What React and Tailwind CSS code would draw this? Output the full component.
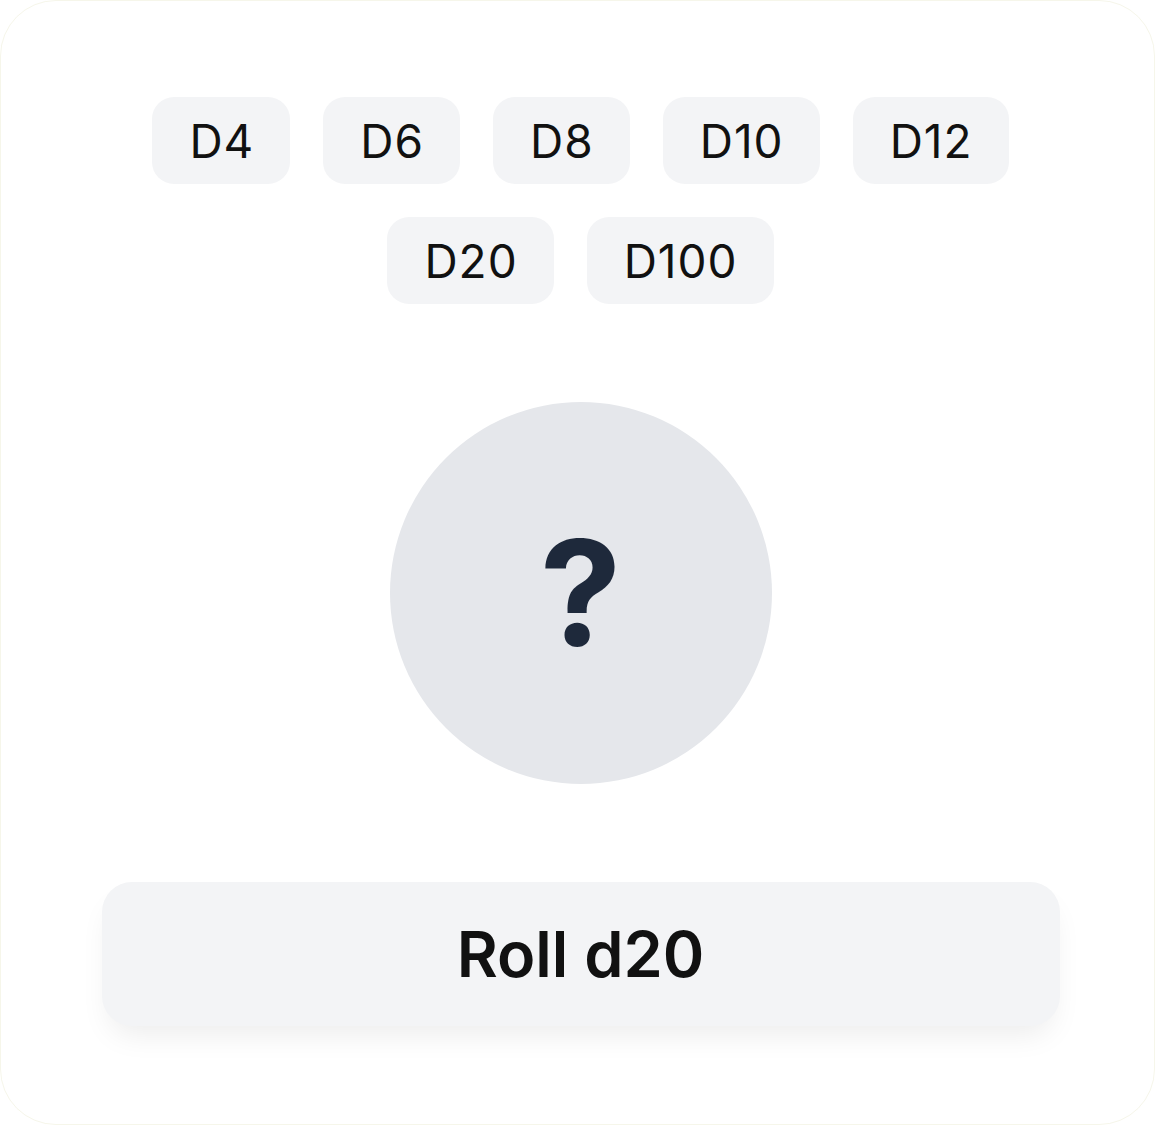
import React, { useState } from 'react';

const dice = ['D4', 'D6', 'D8', 'D10', 'D12', 'D20', 'D100'];

export default function App() {
  const [selected, setSelected] = useState('D20');
  const [result, setResult] = useState(null);

  const roll = () => {
    const sides = parseInt(selected.slice(1), 10);
    setResult(Math.floor(Math.random() * sides) + 1);
  };

  return (
    <div className="min-h-screen bg-white" style={{ fontFamily: 'Inter, "Noto Sans", sans-serif' }}>
      <div className="w-[1155px] h-[1125px] bg-white border border-[#f6f6ea] rounded-[56px] flex flex-col items-center pt-[96px] pl-[6px]">
        <div className="w-[958px] flex flex-wrap justify-center gap-[33px]">
          {dice.map(d => (
            <button
              key={d}
              onClick={() => setSelected(d)}
              className="h-[87px] pl-[37px] pr-[36px] rounded-[22px] bg-[#f3f4f6] text-[46px] tracking-[1px] font-normal text-[#111111] leading-none"
            >
              {d}
            </button>
          ))}
        </div>

        <div className="mt-[98px] w-[382px] h-[382px] rounded-full bg-[#e5e7eb] flex items-center justify-center">
          <span className="text-[146px] font-bold text-[#1e293b] leading-none">
            {result ?? '?'}
          </span>
        </div>

        <button
          onClick={roll}
          className="mt-[98px] w-[958px] h-[144px] rounded-[30px] bg-[#f3f4f6] shadow-[0_16px_30px_-8px_rgba(0,0,0,0.08)] text-[63px] font-semibold text-[#111111]"
        >
          Roll {selected.toLowerCase()}
        </button>
      </div>
    </div>
  );
}
